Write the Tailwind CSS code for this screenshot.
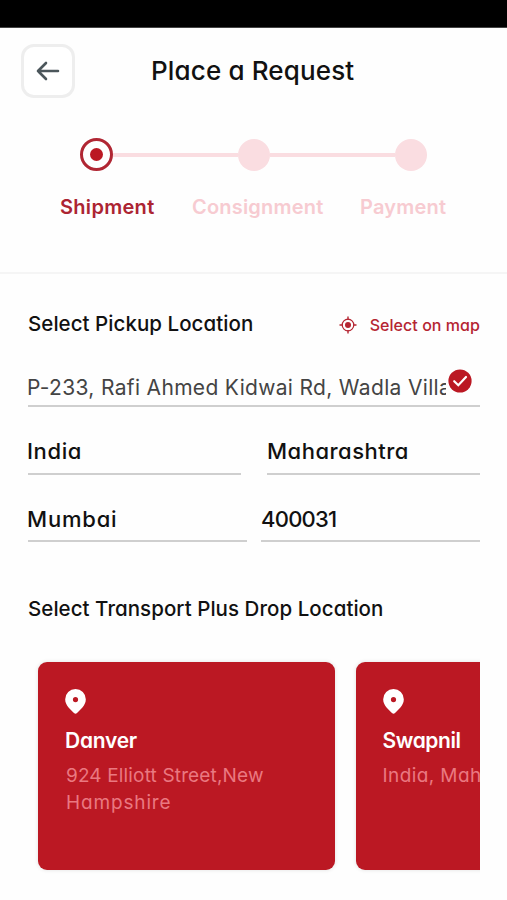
<!DOCTYPE html>
<html lang="en">
<head>
<meta charset="utf-8">
<title>Place a Request</title>
<script src="https://cdn.jsdelivr.net/npm/@tailwindcss/browser@4"></script>
</head>
<body class="w-[507px] h-[900px] overflow-hidden bg-[#fefefe] font-['Inter','Liberation_Sans',sans-serif] text-[#111]">
<div class="h-[27px] bg-black border-b border-[#444] box-content"></div>

<header class="h-[85px] pl-[21px] pt-[16px] flex items-start">
  <button class="size-[54px] shrink-0 rounded-[13px] border-[3px] border-[#eeeeee] bg-white flex items-center justify-center">
    <svg class="w-[24px] h-[20px]" viewBox="0 0 24 20" fill="none" stroke="#4b565b" stroke-width="2.6" stroke-linecap="round" stroke-linejoin="round"><path d="M22 10H2M10 2L2 10L10 18"/></svg>
  </button>
  <h1 class="ml-[76px] h-[54px] leading-[53px] text-[26px] font-medium tracking-[0.15px] whitespace-nowrap [font-feature-settings:'cv11']">Place a Request</h1>
</header>

<section class="h-[161px] border-b-2 border-[#f5f5f5] pt-[25px]">
  <div class="flex items-center pl-[80px] pr-[80px] h-[33px]">
    <div class="size-[33px] shrink-0 rounded-full border-[3px] border-[#b02633] flex items-center justify-center"><div class="size-[13px] rounded-full bg-[#bb1823]"></div></div>
    <div class="h-[4px] flex-1 bg-[#fadde1]"></div>
    <div class="size-[32px] shrink-0 rounded-full bg-[#fadde1]"></div>
    <div class="h-[4px] flex-1 bg-[#fadde1]"></div>
    <div class="size-[32px] shrink-0 rounded-full bg-[#fadde1]"></div>
  </div>
  <div class="flex mt-[21px] pl-[60px] leading-[30px] text-[20px] font-semibold whitespace-nowrap text-[#f7cbd1]">
    <span class="w-[132px] text-[#ac2432] tracking-[0.3px]">Shipment</span>
    <span class="w-[168px] tracking-[0.2px]">Consignment</span>
    <span class="tracking-[0.2px]">Payment</span>
  </div>
</section>

<main class="pl-[28px] pr-[27px] pt-[35px]">
  <div class="flex items-center h-[30px] whitespace-nowrap [font-feature-settings:'cv11']">
    <h2 class="text-[20.5px] font-medium tracking-[0.05px]">Select Pickup Location</h2>
    <div class="ml-auto flex items-center gap-[13px] text-[#b52532]">
      <svg class="size-[18px] mt-px" viewBox="0 0 18 18" fill="none" stroke="currentColor"><circle cx="9" cy="9" r="5.8" stroke-width="1.2"/><circle cx="9" cy="9" r="3" fill="currentColor" stroke="none"/><path d="M9 .5V4M9 14V17.5M.5 9H4M14 9H17.5" stroke-width="1.4"/></svg>
      <span class="text-[16px] font-medium pt-[2px] tracking-[0.05px]">Select on map</span>
    </div>
  </div>

  <div class="mt-[24px] h-[44px] border-b-2 border-[#cfcfcf] flex items-start">
    <div class="w-[419px] -ml-px shrink-0 overflow-hidden whitespace-nowrap leading-[50px] text-[21px] tracking-[0.33px] text-[#444]">P-233, Rafi Ahmed Kidwai Rd, Wadla Village</div>
    <svg class="mt-[6px] ml-[2px] size-[24px] shrink-0" viewBox="0 0 24 24" fill="none"><circle cx="12" cy="12" r="11.6" fill="#bb1823"/><path d="M6.2 12.2L10.3 16.2L18 8" stroke="#fff" stroke-width="2.2" stroke-linecap="round"/></svg>
  </div>

  <div class="flex justify-between text-[22px] font-medium [font-feature-settings:'cv11']">
    <div class="w-[213px] h-[68px] pt-[28px] leading-[33px] border-b-2 border-[#cfcfcf] tracking-[0.6px] -indent-px">India</div>
    <div class="w-[213px] h-[68px] pt-[28px] leading-[33px] border-b-2 border-[#cfcfcf] tracking-[0.5px]">Maharashtra</div>
  </div>
  <div class="flex justify-between text-[22px] font-medium [font-feature-settings:'cv11']">
    <div class="w-[219px] h-[67px] pt-[28px] leading-[32px] border-b-2 border-[#cfcfcf] tracking-[0.8px] -indent-px">Mumbai</div>
    <div class="w-[219px] h-[67px] pt-[28px] leading-[32px] border-b-2 border-[#cfcfcf] tracking-[-0.75px]">400031</div>
  </div>

  <h2 class="mt-[52px] leading-[30px] text-[20.5px] font-medium tracking-[0.05px] whitespace-nowrap [font-feature-settings:'cv11']">Select Transport Plus Drop Location</h2>

  <div class="mt-[29.5px] pt-[8px] pb-[8px] pl-[10px] flex gap-[21px] overflow-hidden whitespace-nowrap [font-feature-settings:'cv11']">
    <article class="w-[296.5px] h-[208px] shrink-0 rounded-[9px] bg-[#bb1823] pl-[28px] pt-[27px] shadow-[0_0_4px_rgba(0,0,0,0.12)]">
      <svg class="w-[21px] h-[25px] -ml-px" viewBox="0 0 21 25"><path fill="#fff" fill-rule="evenodd" d="M10.5 0A10.3 10.3 0 0 0 .2 10.4C.2 16.3 5.6 20.5 9 24.1Q10.5 25.5 12 24.1C15.4 20.5 20.8 16.3 20.8 10.4A10.3 10.3 0 0 0 10.5 0ZM10.5 8A2.6 2.6 0 1 1 10.5 13.2A2.6 2.6 0 1 1 10.5 8Z"/></svg>
      <h3 class="mt-[12px] -ml-px leading-[30px] text-[21px] font-semibold tracking-[-0.25px] text-white">Danver</h3>
      <p class="mt-[6px] leading-[27px] text-[19px] text-[#ea7881]"><span class="tracking-[0.15px]">924 Elliott Street,New</span><br><span class="tracking-[0.85px]">Hampshire</span></p>
    </article>
    <article class="w-[297px] h-[208px] shrink-0 rounded-[9px] bg-[#bb1823] pl-[28px] pt-[27px] shadow-[0_0_4px_rgba(0,0,0,0.12)]">
      <svg class="w-[21px] h-[25px] -ml-px" viewBox="0 0 21 25"><path fill="#fff" fill-rule="evenodd" d="M10.5 0A10.3 10.3 0 0 0 .2 10.4C.2 16.3 5.6 20.5 9 24.1Q10.5 25.5 12 24.1C15.4 20.5 20.8 16.3 20.8 10.4A10.3 10.3 0 0 0 10.5 0ZM10.5 8A2.6 2.6 0 1 1 10.5 13.2A2.6 2.6 0 1 1 10.5 8Z"/></svg>
      <h3 class="mt-[12px] -ml-px leading-[30px] text-[21px] font-semibold tracking-[-0.4px] text-white">Swapnil</h3>
      <p class="mt-[6px] -ml-px leading-[27px] text-[19px] tracking-[0.4px] text-[#ea7881]">India, Maharashtra</p>
    </article>
  </div>
</main>
</body>
</html>
